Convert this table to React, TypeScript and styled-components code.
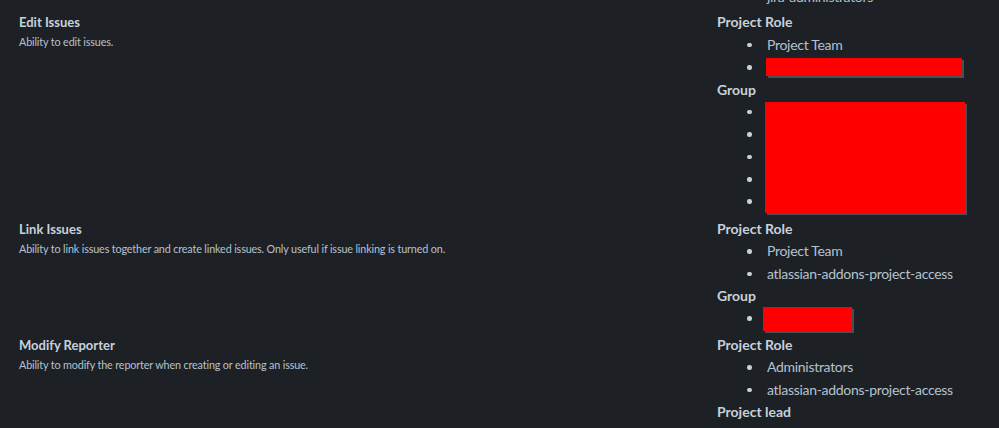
import React from "react";
import styled, { createGlobalStyle } from "styled-components";

const Global = createGlobalStyle`
  html, body { margin: 0; padding: 0; background: #1d2125; }
  body { font-family: "Lato", "Noto Sans", sans-serif; }
`;

const Viewport = styled.div`
  width: 999px;
  height: 428px;
  overflow: hidden;
  background: #1d2125;
`;

const Table = styled.div`
  display: flex;
  flex-direction: column;
  margin-top: -14px;
`;

const Row = styled.div<{ $gap?: number }>`
  display: grid;
  grid-template-columns: 717px 1fr;
  padding-bottom: ${(p) => p.$gap ?? 5}px;
`;

const Info = styled.div`
  padding-left: 19px;
  display: flex;
  flex-direction: column;
`;

const Title = styled.div`
  font-size: 13px;
  font-weight: 700;
  line-height: 22px;
  color: #c7d1db;
`;

const Desc = styled.div`
  font-size: 10.8px;
  letter-spacing: -0.15px;
  line-height: 17px;
  color: #b6c2cf;
`;

const Perms = styled.div`
  display: flex;
  flex-direction: column;
`;

const Heading = styled.div`
  font-size: 14px;
  font-weight: 700;
  line-height: 22.4px;
  color: #c7d1db;
`;

const List = styled.ul`
  position: relative;
  margin: 0;
  padding: 0 0 0 50px;
  list-style: none;
  color: #b6c2cf;
  font-size: 14px;
  letter-spacing: -0.3px;
  line-height: 22.4px;
`;

const Item = styled.li`
  display: flex;
  align-items: center;
  height: 22.4px;
  &::before {
    content: "";
    flex: none;
    width: 4.5px;
    height: 4.5px;
    border-radius: 50%;
    background: #c7d1db;
    margin-left: -20px;
    margin-right: 15.5px;
  }
`;

const Redact = styled.span<{ $w: number; $h: number; $shift?: number }>`
  display: inline-block;
  flex: none;
  width: ${(p) => p.$w}px;
  height: ${(p) => p.$h}px;
  margin-left: ${(p) => p.$shift ?? 0}px;
  background: #ff0000;
  box-shadow: 2px 2px 0 #4b4f55;
`;

const Overlay = styled.div<{ $top: number; $left: number; $w: number; $h: number }>`
  position: absolute;
  top: ${(p) => p.$top}px;
  left: ${(p) => p.$left}px;
  width: ${(p) => p.$w}px;
  height: ${(p) => p.$h}px;
  background: #ff0000;
  box-shadow: 2px 2px 0 #4b4f55;
`;

export default function App() {
  return (
    <>
      <Global />
      <Viewport>
        <Table>
          <Row $gap={3}>
            <Info />
            <Perms>
              <List>
                <Item>jira-administrators</Item>
              </List>
            </Perms>
          </Row>
          <Row>
            <Info>
              <Title>Edit Issues</Title>
              <Desc>Ability to edit issues.</Desc>
            </Info>
            <Perms>
              <Heading>Project Role</Heading>
              <List>
                <Item>Project Team</Item>
                <Item>
                  <Redact $w={196} $h={18} $shift={-1} />
                </Item>
              </List>
              <Heading>Group</Heading>
              <List>
                <Item>&nbsp;</Item>
                <Item>&nbsp;</Item>
                <Item>&nbsp;</Item>
                <Item>&nbsp;</Item>
                <Item>&nbsp;</Item>
                <Overlay $top={1} $left={48} $w={200} $h={111} />
              </List>
            </Perms>
          </Row>
          <Row $gap={4}>
            <Info>
              <Title>Link Issues</Title>
              <Desc>
                Ability to link issues together and create linked issues. Only useful if issue linking is
                turned on.
              </Desc>
            </Info>
            <Perms>
              <Heading>Project Role</Heading>
              <List>
                <Item>Project Team</Item>
                <Item>atlassian-addons-project-access</Item>
              </List>
              <Heading>Group</Heading>
              <List>
                <Item>
                  <Redact $w={89} $h={24} $shift={-4} />
                </Item>
              </List>
            </Perms>
          </Row>
          <Row>
            <Info>
              <Title>Modify Reporter</Title>
              <Desc>Ability to modify the reporter when creating or editing an issue.</Desc>
            </Info>
            <Perms>
              <Heading>Project Role</Heading>
              <List>
                <Item>Administrators</Item>
                <Item>atlassian-addons-project-access</Item>
              </List>
              <Heading>Project lead</Heading>
            </Perms>
          </Row>
        </Table>
      </Viewport>
    </>
  );
}
